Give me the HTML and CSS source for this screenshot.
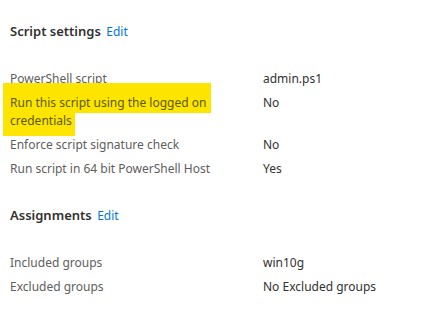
FILE: index.html
```html
<!DOCTYPE html>
<html lang="en">
<head>
  <meta charset="UTF-8" />
  <meta name="viewport" content="width=device-width, initial-scale=1.0" />
  <title>Script settings</title>
  <link rel="stylesheet" href="styles.css">
</head>
<body>

  <section class="section">
    <h2 class="section-title">Script settings <a href="#" class="edit-link">Edit</a></h2>
    <div class="props">
      <div class="prop-label">PowerShell script</div>
      <div class="prop-value">admin.ps1</div>

      <div class="prop-label"><span class="marker marker-top">Run this script using the logged on</span><br><span class="marker marker-bottom">credentials</span></div>
      <div class="prop-value">No</div>

      <div class="prop-label">Enforce script signature check</div>
      <div class="prop-value">No</div>

      <div class="prop-label">Run script in 64 bit PowerShell Host</div>
      <div class="prop-value">Yes</div>
    </div>
  </section>

  <section class="section">
    <h2 class="section-title">Assignments <a href="#" class="edit-link">Edit</a></h2>
    <div class="props">
      <div class="prop-label">Included groups</div>
      <div class="prop-value">win10g</div>

      <div class="prop-label">Excluded groups</div>
      <div class="prop-value">No Excluded groups</div>
    </div>
  </section>

</body>
</html>
```

FILE: styles.css
```css
* {
  margin: 0;
  padding: 0;
  box-sizing: border-box;
}

body {
  background: #ffffff;
  font-family: "Noto Sans", "Open Sans", Arial, sans-serif;
  font-size: 12px;
  color: #323130;
  padding: 22px 10px 0 10px;
}

.section {
  margin-bottom: 28px;
}

.section-title {
  font-size: 13px;
  font-weight: 600;
  line-height: 18px;
  color: #323130;
  margin-bottom: 29px;
}

.edit-link {
  color: #0078d4;
  font-weight: 400;
  font-size: 12px;
  text-decoration: none;
  margin-left: 2px;
}

.props {
  display: grid;
  grid-template-columns: 213px 1fr;
  column-gap: 40px;
  row-gap: 6px;
  line-height: 18px;
}

.prop-label {
  color: #605e5c;
}

.prop-value {
  color: #323130;
}

/* hand-drawn highlighter over one label */
.marker {
  background: #fee500;
  color: #5c5900;
  margin-left: -7px;
  padding-left: 7px;
}

.marker-top {
  padding-top: 11px;
  padding-bottom: 2px;
  padding-right: 5px;
}

.marker-bottom {
  padding-bottom: 7px;
  padding-right: 3px;
}
```
